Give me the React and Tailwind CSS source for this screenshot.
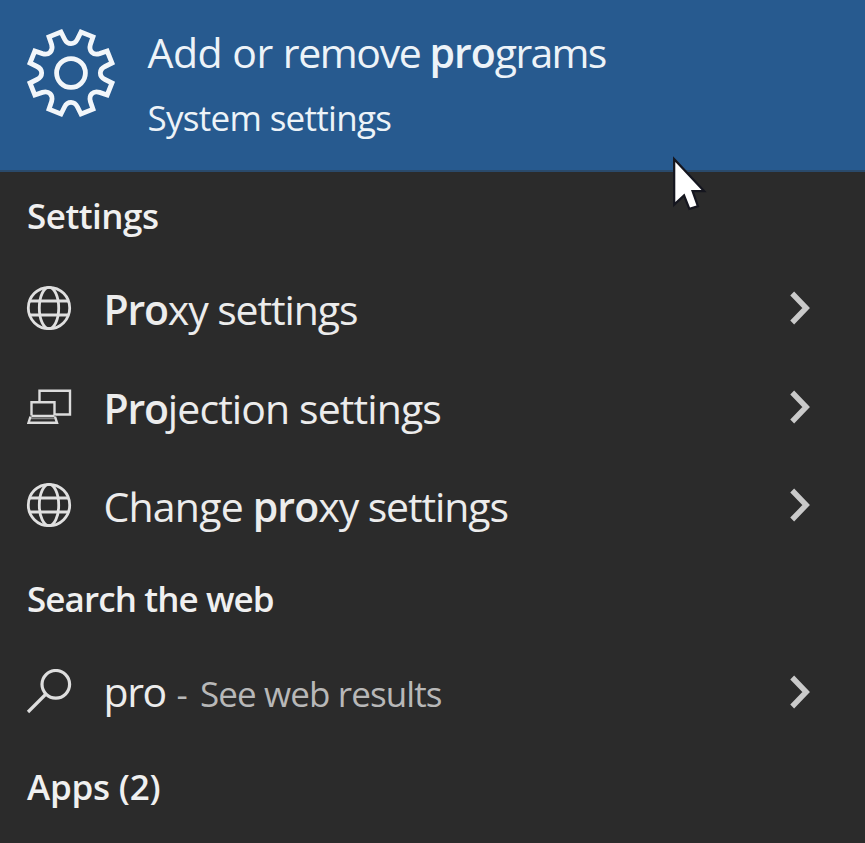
const Chevron = () => (
  <svg className="block h-[98px] w-[30px]" viewBox="0 0 30 98" fill="none" stroke="#cacaca" strokeWidth="5.400">
    <path d="M7.200 34.500 21.200 49 7.200 63.500" />
  </svg>
);

const Gear = () => (
  <svg className="block h-[92px] w-[92px]" viewBox="0 0 92 92" fill="none" stroke="#f2f6fa" strokeWidth="4.800">
    <circle cx="46" cy="46" r="14.400" />
    <path d="M36 5 24 9.800 26.600 17.400C28.500 24 24 28.500 17.400 26.600L9.800 24 5 36 12 39.500C18.200 42.500 18.200 49.500 12 52.500L5 56 9.800 68 17.400 65.400C24 63.500 28.500 68 26.600 74.600L24 82.200 36 87 39.500 80C42.500 73.800 49.500 73.800 52.500 80L56 87 68 82.200 65.400 74.600C63.500 68 68 63.500 74.600 65.400L82.200 68 87 56 80 52.500C73.800 49.500 73.800 42.500 80 39.500L87 36 82.200 24 74.600 26.600C68 28.500 63.500 24 65.400 17.400L68 9.800 56 5 52.500 12C49.500 18.200 42.500 18.200 39.500 12Z" />
  </svg>
);

const Globe = () => (
  <svg className="block h-[46px] w-[46px]" viewBox="0 0 46 46" fill="none" stroke="#e0e0e0" strokeWidth="2.800">
    <circle cx="23" cy="23" r="20.700" />
    <ellipse cx="23" cy="23" rx="9.700" ry="20.700" />
    <path d="M3.500 16h39M3.500 30h39" />
  </svg>
);

const Project = () => (
  <svg className="block h-[46px] w-[46px]" viewBox="0 0 46 46" fill="none" stroke="#dcdcdc" strokeWidth="2.400">
    <path d="M13.500 18V6.700H44V30.500H29.500M5.500 31.500V18.200H28.500V31.500M5.500 32H28.500M4.500 32.500 2.500 38.800H31L29 32.500" />
    <path d="M4.500 34.500h25" strokeWidth="1.500" opacity="0.5" />
  </svg>
);

const Search = () => (
  <svg className="block h-[46px] w-[46px]" viewBox="0 0 46 46" fill="none" stroke="#dedede" strokeWidth="3.200">
    <circle cx="29.800" cy="15.300" r="13.800" />
    <path d="M20 25 2 43" />
  </svg>
);

const Row = ({ icon, children }) => (
  <div className="flex h-[98.5px] items-center pl-[26px] pr-[50px]">
    {icon}
    <div className="ml-[31.5px] grow pt-[2px] text-[41px] leading-[98px] text-[#ececec]">{children}</div>
    <Chevron />
  </div>
);

const Heading = ({ children }) => (
  <h2 className="h-[88px] pl-[27px] text-[35px] font-semibold leading-[88px] text-[#f0f0f0]">{children}</h2>
);

export default function App() {
  return (
    <main className="relative h-[843px] w-[865px] overflow-hidden whitespace-pre bg-[#2b2b2b] font-['Open_Sans','Noto_Sans',sans-serif]">
      <header className="flex h-[172px] items-start border-b-2 border-[#2a4a6b] bg-[#275a8f] pl-[25px] text-[#edf3f8]">
        <div className="pt-[27px]"><Gear /></div>
        <div className="pl-[30.5px] pt-[22px]">
          <div className="text-[41px] leading-[60px]">
            <span className="tracking-[-0.5px]">Add or </span>
            <span className="tracking-[-1.4px]">remove </span>
            <span className="font-semibold tracking-[-1px]">pro</span>
            <span className="tracking-[-1.700px]">grams</span>
          </div>
          <div className="pt-[6px] text-[35px] leading-[60px] tracking-[-0.7px]">System settings</div>
        </div>
      </header>
      <div className="-mt-px pt-px"><Heading><span className="tracking-[-0.5px]">Settings</span></Heading></div>
      <div className="-mt-px">
        <Row icon={<Globe />}>
          <span className="font-semibold tracking-[-1.2px]">Pro</span>
          <span className="tracking-[-1.1px]">xy settings</span>
        </Row>
      </div>
      <Row icon={<Project />}>
        <span className="font-semibold tracking-[-1.2px]">Pro</span>
        <span className="tracking-[-0.9px]">jection settings</span>
      </Row>
      <Row icon={<Globe />}>
        <span className="tracking-[-0.8px]">Change </span>
        <span className="font-semibold tracking-[-0.900px]">pro</span>
        <span className="tracking-[-1.1px]">xy settings</span>
      </Row>
      <Heading><span className="tracking-[-0.9px]">Search the web</span></Heading>
      <Row icon={<Search />}>
        <span className="tracking-[-1.400px]">pro</span>
        <span className="text-[35px] tracking-[1.6px] text-[#b8b8b8]"> - </span>
        <span className="text-[35px] tracking-[-0.9px] text-[#b8b8b8]">See web results</span>
      </Row>
      <div className="pt-[2px]"><Heading><span className="tracking-[-0.2px]">Apps (2)</span></Heading></div>
      <svg className="absolute left-[668px] top-[152px] h-[62px] w-[40px]" viewBox="0 0 40 62">
        <path d="M7.300 10V50L16.500 41.500 22 55.500 28.500 53.500 23 38H33.500Z" fill="#fff" stroke="#15161f" strokeWidth="4.500" paintOrder="stroke" />
      </svg>
    </main>
  );
}
